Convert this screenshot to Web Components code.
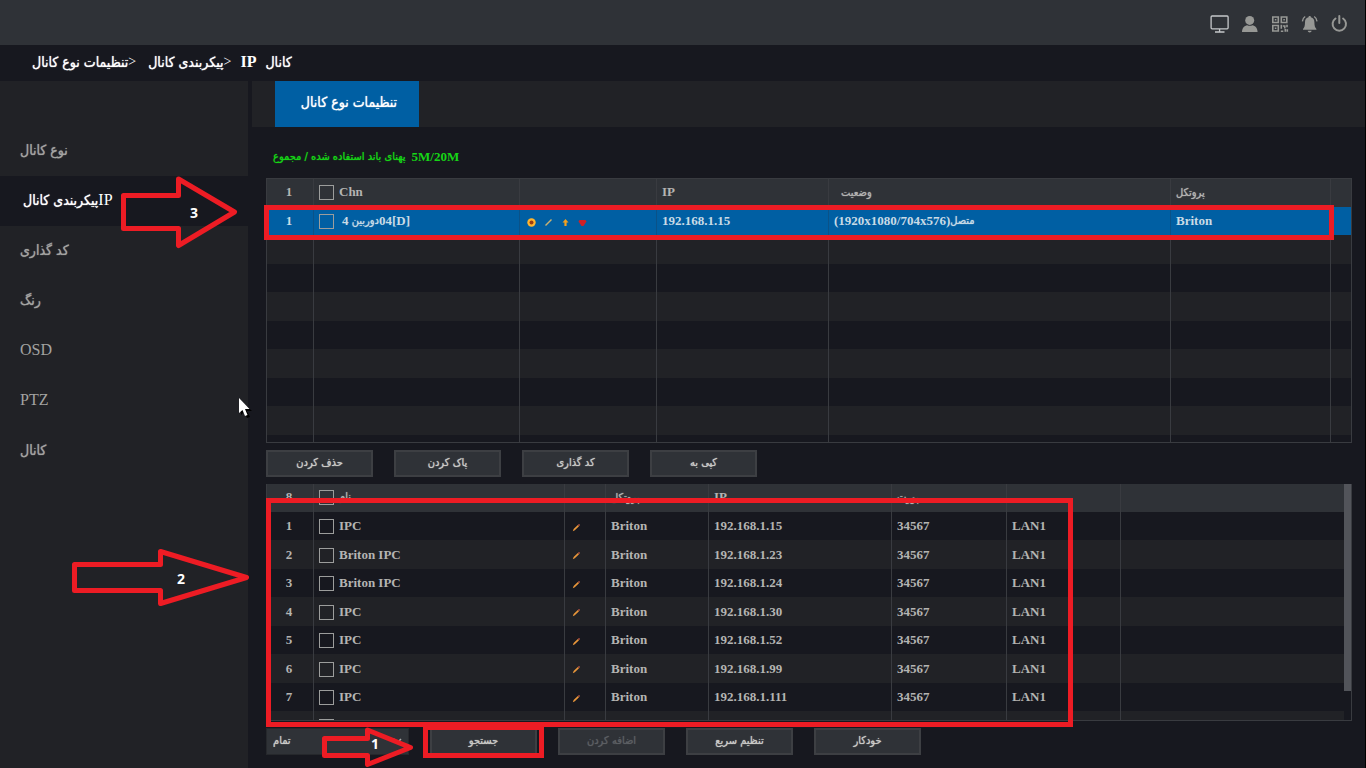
<!DOCTYPE html>
<html lang="fa">
<head>
<meta charset="utf-8">
<title>تنظیمات نوع کانال</title>
<style>
html, body { margin: 0; min-height: 100%; background: #17181f; }
body {
  --bar: #2f3237; --panel: #212226; --deep: #17181f; --line: #393b40; --blue: #005fa3;
  --text: #b4b4b2; --red: #ed1c24; --fa: 11px;
  color: var(--text);
  font: bold 13px/18px "Liberation Serif", "DejaVu Sans", serif;
}
</style>
</head>
<body>
<nvr-app></nvr-app>

<template id="t-app">
  <style>
    :host { display: flex; flex-direction: column; min-height: 100vh; position: relative; box-sizing: border-box; border-right: 1px solid #000; overflow: hidden; }
    .body { display: flex; flex: 1; gap: 4px; }
    main { flex: 1; min-width: 0; }
    .content { padding: 20px 13px 0 14px; }
    .bandwidth { margin: 0 0 11px 7px; height: 20px; line-height: 20px; color: #16d616; font-size: 13px; display: flex; gap: 6px; }
    .row { display: flex; gap: 21px; margin: 7px 0; }
    nvr-annotations { position: absolute; inset: 0; }
  </style>
  <nvr-topbar></nvr-topbar>
  <nvr-crumbs></nvr-crumbs>
  <div class="body">
    <nvr-nav></nvr-nav>
    <main>
      <nvr-tabs><nvr-fa>تنظیمات نوع کانال</nvr-fa></nvr-tabs>
      <div class="content">
        <div class="bandwidth"><nvr-fa>پهنای باند استفاده شده / مجموع</nvr-fa><span>5M/20M</span></div>
        <nvr-channels></nvr-channels>
        <div class="row">
          <nvr-button>حذف کردن</nvr-button>
          <nvr-button>پاک کردن</nvr-button>
          <nvr-button>کد گذاری</nvr-button>
          <nvr-button>کپی به</nvr-button>
        </div>
        <nvr-devices></nvr-devices>
        <div class="row">
          <nvr-filter></nvr-filter>
          <nvr-button>جستجو</nvr-button>
          <nvr-button disabled>اضافه کردن</nvr-button>
          <nvr-button>تنظیم سریع</nvr-button>
          <nvr-button>خودکار</nvr-button>
        </div>
      </div>
    </main>
  </div>
  <nvr-annotations></nvr-annotations>
</template>

<template id="t-fa">
  <style>
    :host { display: inline-block; direction: rtl; unicode-bidi: isolate; font-family: "DejaVu Sans Condensed", "DejaVu Sans", sans-serif; font-size: var(--fa); font-weight: normal; white-space: nowrap; text-shadow: 0 0 1px currentColor; }
  </style><slot></slot>
</template>

<template id="t-topbar">
  <style>
    :host { display: flex; height: 45px; background: var(--bar); align-items: center; justify-content: flex-end; gap: 10px; padding: 3px 15px 0 0; box-sizing: border-box; }
    button { all: unset; width: 20px; height: 20px; display: block; color: #979895; }
    svg { display: block; }
  </style>
  <button aria-label="نمایشگر"><svg width="20" height="20" viewBox="0 0 20 20" fill="none" stroke="#c5c8ca" stroke-width="1.3"><rect x="1.1" y="2" width="17" height="12.8" rx="1"/><path d="M9.600 15v2.6M5 18h9.5"/></svg></button>
  <button aria-label="کاربر"><svg width="20" height="20" viewBox="0 0 20 20" fill="currentColor"><circle cx="9.700" cy="6.400" r="4.500"/><path d="M2 18c0-4 2.400-6.200 5.200-6.800 1.600.8 3.600.8 5.200 0 2.800.6 5.200 2.800 5.200 6.800z"/></svg></button>
  <button aria-label="کد QR"><svg width="20" height="20" viewBox="0 0 20 20" fill="none" stroke="currentColor" stroke-width="1.6"><path d="M2.800 3h5.500v5.500H2.800zM11.300 3h5.500v5.500h-5.500zM2.800 11.500h5.500V17H2.800z"/><path d="M4.800 5.800h1.600M13.300 5.800h1.600M4.800 14.300h1.600M11.300 10.700v4M10.800 17.200h2.500M12.800 12h2v2.500M17 10.700v2.600M15.300 15v2.800M17.300 15.300v2.500"/></svg></button>
  <button aria-label="هشدار"><svg width="20" height="20" viewBox="0 0 20 20" fill="currentColor"><path d="M9.700 2c.8 0 1.200.5 1.200 1.200 2.500.6 3.500 2.600 3.500 5 0 3.600.6 5.300 2 6.800v.8H3V15c1.400-1.500 2-3.200 2-6.800 0-2.400 1-4.400 3.500-5C8.500 2.500 8.900 2 9.700 2zM7.700 16.800h4c-.3 1.200-1 1.700-2 1.700s-1.700-.5-2-1.700z"/><path d="M5.200 2.500C3.400 3.600 2.600 5.200 2.400 7.400M14.200 2.500c1.800 1.100 2.600 2.700 2.800 4.900" fill="none" stroke="currentColor" stroke-width="1.400"/></svg></button>
  <button aria-label="خاموش"><svg width="20" height="20" viewBox="0 0 20 20" fill="none" stroke="currentColor" stroke-width="2" stroke-linecap="round"><path d="M5.500 4.500a6.700 6.700 0 1 0 7.600 0M9.300 2v7"/></svg></button>
</template>

<template id="t-crumbs">
  <style>
    :host { display: block; height: 36px; line-height: 33px; color: #fff; --fa: 14px; }
    nav { display: flex; padding-left: 32px; font-size: 16px; }
    a { color: inherit; text-decoration: none; }
    i { font: 14px/33px "Liberation Serif", serif; }
    .gap { margin-left: 12px; } .near { margin-left: 9px; }
  </style>
  <nav aria-label="مسیر"><a href="#type"><nvr-fa>تنظیمات نوع کانال</nvr-fa></a><i>&gt;</i>
  <a class="gap" href="#config"><nvr-fa>پیکربندی کانال</nvr-fa></a><i>&gt;</i>
  <a class="near" href="#ip">IP</a><a class="near" href="#channel"><nvr-fa>کانال</nvr-fa></a></nav>
</template>

<template id="t-nav">
  <style>
    :host { display: block; width: 248px; box-sizing: border-box; padding-top: 45px; background: var(--panel); --fa: 14px; }
    a { display: flex; align-items: center; height: 50px; padding: 0 0 3px 20px; box-sizing: border-box; color: #a3a3a1; text-decoration: none; font-size: 16px; font-weight: normal; }
    a.on { background: var(--deep); color: #fff; padding-left: 23px; }
  </style>
  <nav>
    <a href="#type"><nvr-fa>نوع کانال</nvr-fa></a>
    <a href="#ip" class="on" aria-current="page"><nvr-fa>پیکربندی کانال</nvr-fa>IP</a>
    <a href="#encode"><nvr-fa>کد گذاری</nvr-fa></a>
    <a href="#color"><nvr-fa>رنگ</nvr-fa></a>
    <a href="#osd">OSD</a>
    <a href="#ptz">PTZ</a>
    <a href="#channel"><nvr-fa>کانال</nvr-fa></a>
  </nav>
</template>

<template id="t-tabs">
  <style>
    :host { display: flex; height: 46px; background: var(--panel); padding-left: 23px; --fa: 14px; }
    button { all: unset; width: 144px; text-align: center; background: var(--blue); color: #fff; padding: 0 0 4px 4px; box-sizing: border-box; }
  </style>
  <button role="tab" aria-selected="true"><slot></slot></button>
</template>

<template id="t-button">
  <style>
    :host { display: block; width: 107px; }
    button { display: block; width: 100%; height: 27px; padding: 0 0 2px; margin: 0; border: 2px solid #3d3f43; background: var(--bar); color: #cbcbc8; font: inherit; box-sizing: border-box; }
    :host([disabled]) button { color: #5c5f63; }
  </style>
  <button type="button"><nvr-fa><slot></slot></nvr-fa></button>
</template>

<template id="t-filter">
  <style>
    :host { display: block; width: 143px; position: relative; }
    select { appearance: none; width: 100%; height: 27px; border: 1px solid #26282c; background: var(--bar); color: #cbcbc8; font: 11px "DejaVu Sans Condensed", "DejaVu Sans", sans-serif; text-shadow: 0 0 1px currentColor; padding: 0 6px 3px; display: block; border-radius: 0; }
    svg { position: absolute; right: 7px; top: 10px; }
  </style>
  <select aria-label="فیلتر"><option>تمام</option></select>
  <svg width="9" height="6" viewBox="0 0 9 6" fill="none" stroke="#a8a8a6" stroke-width="1.500"><path d="M1 1l3.500 3.500L8 1"/></svg>
</template>

<template id="t-annotations">
  <style>
    :host { display: block; pointer-events: none; }
    div { position: absolute; border: 5px solid var(--red); box-sizing: border-box; }
    .channel { left: 264px; right: 31px; top: 205px; height: 35px; }
    .devices { left: 266px; width: 807px; top: 498px; height: 229px; }
    .search { left: 423px; width: 121px; top: 725px; height: 33px; }
    svg { position: absolute; left: 0; top: 0; overflow: visible; }
    text { font: bold 14px "Open Sans", sans-serif; fill: #fff; text-anchor: middle; }
  </style>
  <div class="channel"></div><div class="devices"></div><div class="search"></div>
  <svg width="420" height="768" viewBox="0 0 420 768">
    <g fill="none" stroke="#ed1c24" stroke-width="5" stroke-linejoin="round">
      <path d="M123.500 195.500H178.500V179L234.500 212L178.500 245.500V228.500H123.500Z"/>
      <path d="M74.500 564.500H160.500V551.500L246.500 577.500L160.500 603.500V590.500H74.500Z"/>
      <path d="M324.500 738.500H367.500V730L410.500 747.500L367.500 764.500V755.500H324.500Z"/>
    </g>
    <text x="194" y="218">3</text><text x="181" y="584">2</text><text x="375" y="749">1</text>
    <path d="M241 401v14l3-3 3 6 3-1-3-6h5z" fill="#000"/>
    <path d="M239 398v15l3.500-3 2.500 6 2.500-1-2.500-6h4.500z" fill="#fff"/>
  </svg>
</template>

<script>
const TABLE_CSS = `
  :host { display: block; position: relative; overflow: hidden; box-sizing: border-box; border: 1px solid var(--line); }
  table { width: 100%; table-layout: fixed; border-collapse: separate; border-spacing: 0; }
  th, td { padding: 0 0 0 5px; height: 28px; text-align: left; font-weight: bold; white-space: nowrap; border-right: 1px solid var(--line); box-sizing: border-box; overflow: hidden; line-height: 18px; }
  tr:nth-child(even) > td { height: 29px; }
  th:first-child, td:first-child { text-align: center; padding: 0 2px 0 0; }
  thead th, thead th:first-child { background: var(--bar); padding-bottom: 2px; }
  th:last-child, td:last-child { border-right: 0; }
  .cell { display: flex; align-items: center; height: 18px; }
  input { appearance: none; width: 15px; height: 15px; margin: 1px 5px 0 0; border: 1px solid #9c9d9c; flex: none; box-sizing: border-box; border-radius: 0; }
  svg { display: block; flex: none; }
`;
const fa = t => `<nvr-fa>${t}</nvr-fa>`;
const check = (label, content) => `<div class="cell"><input type="checkbox" aria-label="${label}">${content}</div>`;
const cell = t => `<div class="cell">${t}</div>`;
const tableHtml = (widths, head, rows) => `<table><colgroup>${widths.map(w => `<col${w ? ` style="width:${w}px"` : ''}>`).join('')}</colgroup>
  <thead><tr>${head.map(h => `<th scope="col">${h}</th>`).join('')}</tr></thead>
  <tbody>${rows.map(r => `<tr${r.cls ? ` class="${r.cls}"` : ''}>${r.cells.map(c => `<td>${c}</td>`).join('')}</tr>`).join('')}</tbody></table>`;

function define(name, html) {
  customElements.define(name, class extends HTMLElement {
    constructor() {
      super();
      const root = this.attachShadow({ mode: 'open' });
      if (html) root.innerHTML = html;
      else root.append(document.getElementById(name.replace('nvr-', 't-')).content.cloneNode(true));
      const button = name === 'nvr-button' && root.querySelector('button');
      if (button) queueMicrotask(() => { button.disabled = this.hasAttribute('disabled'); });
    }
  });
}

const pencil = '<svg width="9" height="9" viewBox="0 0 9 9"><path d="M.8 8.200l.8-2.200 4.200-4 1.200 1.200-4.200 4z" fill="#e8963a"/><path d="M6 2l1-1 1 1-1 1z" fill="#e0604a"/></svg>';
const tools = `<div class="cell tools">
  <svg width="9" height="9" viewBox="0 0 9 9"><circle cx="4.500" cy="4.500" r="4.200" fill="#ffb52e"/><circle cx="4.500" cy="4.500" r="2" fill="#9c3c10"/></svg>
  <svg width="9" height="9" viewBox="0 0 9 9"><path d="M1.500 7.500L7.500 1.500" stroke="#c9b272" stroke-width="1.400"/></svg>
  <svg width="9" height="9" viewBox="0 0 9 9"><path d="M4.500 1L7.500 4.500H5.600V8H3.400V4.500H1.500z" fill="#f2a01e"/></svg>
  <svg width="9" height="9" viewBox="0 0 9 9"><path d="M.5 3.500l1-1.500h6l1 1.500L5.500 8h-2z" fill="#cf2026"/></svg></div>`;

const blank = Array.from({ length: 8 }, () => ({ cells: Array(7).fill('') }));
define('nvr-channels', `<style>${TABLE_CSS}
  :host { height: 265px; }
  tbody tr { background: var(--deep); } tbody tr:nth-child(even) { background: var(--panel); }
  tbody tr.on { background: var(--blue); color: #c9dbe6; } .on td { border-color: #0a5288; }
  .tools { gap: 8px; padding: 2px 0 0 2px; } .name { margin-left: 3px; }
  .status { margin-left: 7px; }
</style>` + tableHtml([47, 206, 137, 172, 0, 160, 20],
  ['1', check('همه', 'Chn'), '', 'IP', `<span class="status">${fa('وضعیت')}</span>`, fa('پروتکل'), ''],
  [{ cls: 'on', cells: ['1', check('دوربین', `<span class="name">4&nbsp;</span>${fa('دوربین')}<bdi>04[D]</bdi>`), tools, '192.168.1.15', cell(`<bdi>(1920x1080/704x576)</bdi>${fa('متصل')}`), 'Briton', ''] }, ...blank]));

const devices = [['IPC', '15'], ['Briton IPC', '23'], ['Briton IPC', '24'], ['IPC', '30'], ['IPC', '52'], ['IPC', '99'], ['IPC', '111']];
define('nvr-devices', `<style>${TABLE_CSS}
  :host { height: 237px; border-top: 0; padding-right: 7px; }
  tbody tr:nth-child(even) { background: var(--panel); }
  .edit { padding: 2px 0 0 2px; }
  .thumb { position: absolute; right: 0; top: 0; width: 7px; height: 207px; background: #52545a; }
</style>` + tableHtml([47, 251, 41, 103, 183, 115, 114, 0],
  ['8', check('همه', fa('نام')), '', fa('پروتکل'), 'IP', fa('پورت'), '', ''],
  [...devices.map(([n, ip], i) => ({ cells: [i + 1, check(n + ' ' + ip, n), `<div class="cell edit">${pencil}</div>`, 'Briton', '192.168.1.' + ip, '34567', 'LAN1', ''] })),
   { cells: ['', check('دستگاه', ''), '', '', '', '', '', ''] }]) + '<div class="thumb"></div>');

['fa', 'topbar', 'crumbs', 'nav', 'tabs', 'button', 'filter', 'annotations', 'app'].forEach(n => define('nvr-' + n));
</script>
</body>
</html>
